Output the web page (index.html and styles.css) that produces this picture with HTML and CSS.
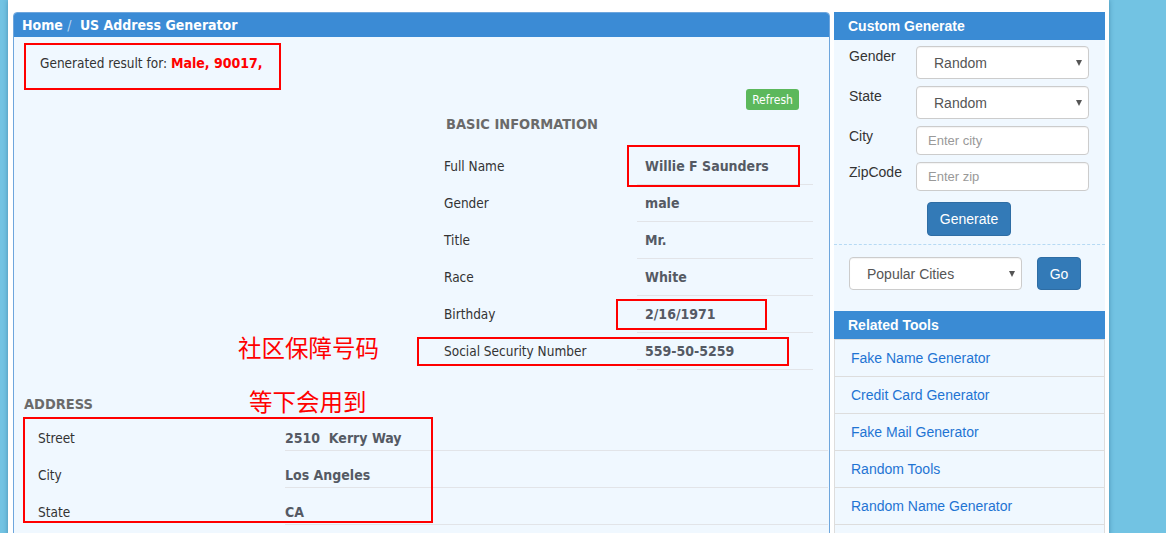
FILE: index.html
```html
<!DOCTYPE html>
<html lang="en">
<head>
<meta charset="utf-8">
<title>US Address Generator</title>
<link rel="stylesheet" href="styles.css">
</head>
<body>
<div class="page">
  <main class="panel">
    <div class="panel-head">Home <span class="sep">/</span> US Address Generator</div>
    <div class="panel-body">
      <p class="result-line">Generated result for: <strong class="hl">Male, 90017,</strong></p>

      <section class="basic">
        <div class="refresh-row"><button class="btn-refresh" type="button">Refresh</button></div>
        <h3 class="sec-title basic-title">BASIC INFORMATION</h3>
        <div class="info-row"><span class="lbl">Full Name</span><span class="val">Willie F Saunders</span></div>
        <div class="info-row"><span class="lbl">Gender</span><span class="val">male</span></div>
        <div class="info-row"><span class="lbl">Title</span><span class="val">Mr.</span></div>
        <div class="info-row"><span class="lbl">Race</span><span class="val">White</span></div>
        <div class="info-row"><span class="lbl">Birthday</span><span class="val">2/16/1971</span></div>
        <div class="info-row"><span class="lbl">Social Security Number</span><span class="val">559-50-5259</span></div>
      </section>

      <section class="address">
        <h3 class="sec-title">ADDRESS</h3>
        <div class="addr-row"><span class="lbl">Street</span><span class="val">2510&nbsp; Kerry Way</span></div>
        <div class="addr-row"><span class="lbl">City</span><span class="val">Los Angeles</span></div>
        <div class="addr-row"><span class="lbl">State</span><span class="val">CA</span></div>
      </section>
    </div>

    <div class="mark mark-result"></div>
    <div class="mark mark-name"></div>
    <div class="mark mark-birth"></div>
    <div class="mark mark-ssn"></div>
    <div class="mark mark-addr"></div>
    <div class="note note-ssn">社区保障号码</div>
    <div class="note note-later">等下会用到</div>
  </main>

  <aside class="side">
    <div class="side-head">Custom Generate</div>
    <form class="side-form">
      <div class="f-row">
        <label class="f-lbl">Gender</label>
        <span class="sel-wrap"><select class="f-ctl"><option>Random</option></select></span>
      </div>
      <div class="f-row">
        <label class="f-lbl">State</label>
        <span class="sel-wrap"><select class="f-ctl"><option>Random</option></select></span>
      </div>
      <div class="f-row">
        <label class="f-lbl">City</label>
        <input class="f-ctl f-input" type="text" placeholder="Enter city">
      </div>
      <div class="f-row">
        <label class="f-lbl">ZipCode</label>
        <input class="f-ctl f-input" type="text" placeholder="Enter zip">
      </div>
      <div class="gen-row"><button class="btn-blue btn-gen" type="button">Generate</button></div>
    </form>
    <div class="cities">
      <span class="sel-wrap"><select class="f-ctl city-sel"><option>Popular Cities</option></select></span>
      <button class="btn-blue btn-go" type="button">Go</button>
    </div>
    <div class="side-head">Related Tools</div>
    <ul class="tools">
      <li><a href="#">Fake Name Generator</a></li>
      <li><a href="#">Credit Card Generator</a></li>
      <li><a href="#">Fake Mail Generator</a></li>
      <li><a href="#">Random Tools</a></li>
      <li><a href="#">Random Name Generator</a></li>
      <li class="tools-more"></li>
    </ul>
  </aside>
</div>
</body>
</html>
```
FILE: styles.css
```css
* { box-sizing: border-box; }
html, body { margin: 0; padding: 0; }
body {
  background: #72c3e3;
  font-family: "Liberation Sans", Arial, sans-serif;
  height: 533px;
  overflow: hidden;
}
.page {
  margin-left: 8px;
  width: 1101px;
  min-height: 533px;
  background: #ffffff;
  box-shadow: 0 0 5px rgba(20, 80, 120, 0.45);
  padding: 12px 4px 0 5px;
  display: flex;
  align-items: flex-start;
  gap: 4px;
}

/* ---------- main panel ---------- */
.panel {
  position: relative;
  width: 817px;
  flex: none;
  border: 1px solid #6ea6dd;
  border-radius: 4px 4px 0 0;
  background: #f0f8ff;
  font-family: "DejaVu Sans Condensed", "DejaVu Sans", sans-serif;
  font-stretch: condensed;
  font-size: 13.5px;
  color: #333;
  padding-bottom: 40px;
}
.panel-head {
  height: 24px;
  line-height: 24px;
  background: #3b8bd5;
  color: #fff;
  font-weight: bold;
  font-size: 14px;
  padding-left: 8px;
  border-radius: 3px 3px 0 0;
}
.panel-head .sep { color: #b9d6f2; font-weight: normal; margin: 0 4px 0 0; }
.panel-body { padding: 0 0 0 10px; }
.result-line {
  margin: 17px 0 0 16px;
  line-height: 18px;
}
.hl { color: #f00; font-size: 14px; }

.sec-title {
  margin: 0;
  font-size: 14.5px;
  line-height: 17px;
  font-weight: bold;
  color: #6a6a6a;
}
.lbl { color: #333; }
.val { font-weight: bold; color: #555a64; font-size: 14px; }

.basic {
  width: 382px;
  margin: 17px 16px 0 auto;
}
.refresh-row { display: flex; justify-content: flex-end; padding-right: 14px; }
.btn-refresh {
  height: 21px;
  width: 53px;
  padding: 0;
  border: 0;
  border-radius: 3px;
  background: #5cb85c;
  color: #fff;
  font-family: inherit;
  font-stretch: condensed;
  font-size: 12px;
}
.basic-title { margin: 6px 0 15px 15px; }
.info-row {
  display: grid;
  grid-template-columns: 206px 1fr;
  height: 37px;
  line-height: 17px;
}
.info-row .lbl { padding: 10px 0 0 13px; }
.info-row .val { padding: 10px 0 0 8px; border-bottom: 1px solid #e2e4e8; }

.address { margin: 26px 1px 0 0; }
.address .sec-title { margin-bottom: 1px; }
.addr-row {
  display: grid;
  grid-template-columns: 261px 1fr;
  height: 37px;
  line-height: 17px;
}
.addr-row .lbl { padding: 16px 0 0 14px; }
.addr-row .val { padding: 16px 0 0 0; border-bottom: 1px solid #e2e4e8; }

/* annotations */
.mark { position: absolute; border: 2px solid #f00; }
.mark-result { left: 10px; top: 30px; width: 257px; height: 47px; }
.mark-name { left: 613px; top: 132px; width: 173px; height: 42px; }
.mark-birth { left: 602px; top: 286px; width: 151px; height: 31px; }
.mark-ssn { left: 403px; top: 324px; width: 372px; height: 29px; }
.mark-addr { left: 9px; top: 404px; width: 410px; height: 106px; }
.note {
  position: absolute;
  color: #f00;
  font-family: "Noto Sans CJK SC", sans-serif;
  font-size: 23.5px;
  line-height: 24px;
  white-space: nowrap;
}
.note-ssn { left: 224px; top: 322px; }
.note-later { left: 235px; top: 376px; }

/* ---------- side column ---------- */
.side {
  width: 271px;
  flex: none;
  font-size: 14px;
  color: #333;
}
.side-head {
  height: 28px;
  line-height: 28px;
  background: #3a8bd4;
  color: #fff;
  font-weight: bold;
  font-size: 14px;
  padding-left: 14px;
}
.side-form {
  background: #f0f8ff;
  padding: 6px 15px 8px;
  border-bottom: 1px dashed #b6daf4;
  display: flex;
  flex-direction: column;
  gap: 7px;
}
.f-row { display: grid; grid-template-columns: 67px 173px; align-items: start; }
.f-lbl { line-height: 20px; }
.sel-wrap { position: relative; display: block; }
.sel-wrap::after {
  content: "";
  position: absolute;
  right: 7px;
  top: 14px;
  border-left: 3.5px solid transparent;
  border-right: 3.5px solid transparent;
  border-top: 6px solid #555;
  pointer-events: none;
}
.f-ctl {
  display: block;
  width: 173px;
  height: 33px;
  border: 1px solid #ccc;
  border-radius: 4px;
  background: #fff;
  font-family: "Liberation Sans", Arial, sans-serif;
  font-size: 14px;
  color: #555;
  padding: 0 0 0 17px;
  margin: 0;
  -webkit-appearance: none;
  appearance: none;
  box-shadow: inset 0 1px 1px rgba(0,0,0,0.05);
}
.f-input { height: 29px; padding-left: 11px; font-size: 13px; }
.f-input::placeholder { color: #999; }
.gen-row { display: flex; justify-content: center; margin-top: 4px; }
.btn-blue {
  background: #337ab7;
  border: 1px solid #2e6da4;
  border-radius: 4px;
  color: #fff;
  font-family: "Liberation Sans", Arial, sans-serif;
  font-size: 14px;
  padding: 0;
}
.btn-gen { width: 84px; height: 34px; margin-left: -1px; }
.cities {
  background: #f0f8ff;
  padding: 12px 15px 21px;
  display: flex;
  gap: 15px;
}
.city-sel { padding-left: 17px; }
.btn-go { width: 44px; height: 33px; }
.tools {
  list-style: none;
  margin: 0;
  padding: 0;
  background: #f0f8ff;
  border: 1px solid #ddd;
}
.tools li {
  height: 37px;
  line-height: 36px;
  padding-left: 16px;
  border-bottom: 1px solid #ddd;
}
.tools a { color: #1f74d3; text-decoration: none; }
```
